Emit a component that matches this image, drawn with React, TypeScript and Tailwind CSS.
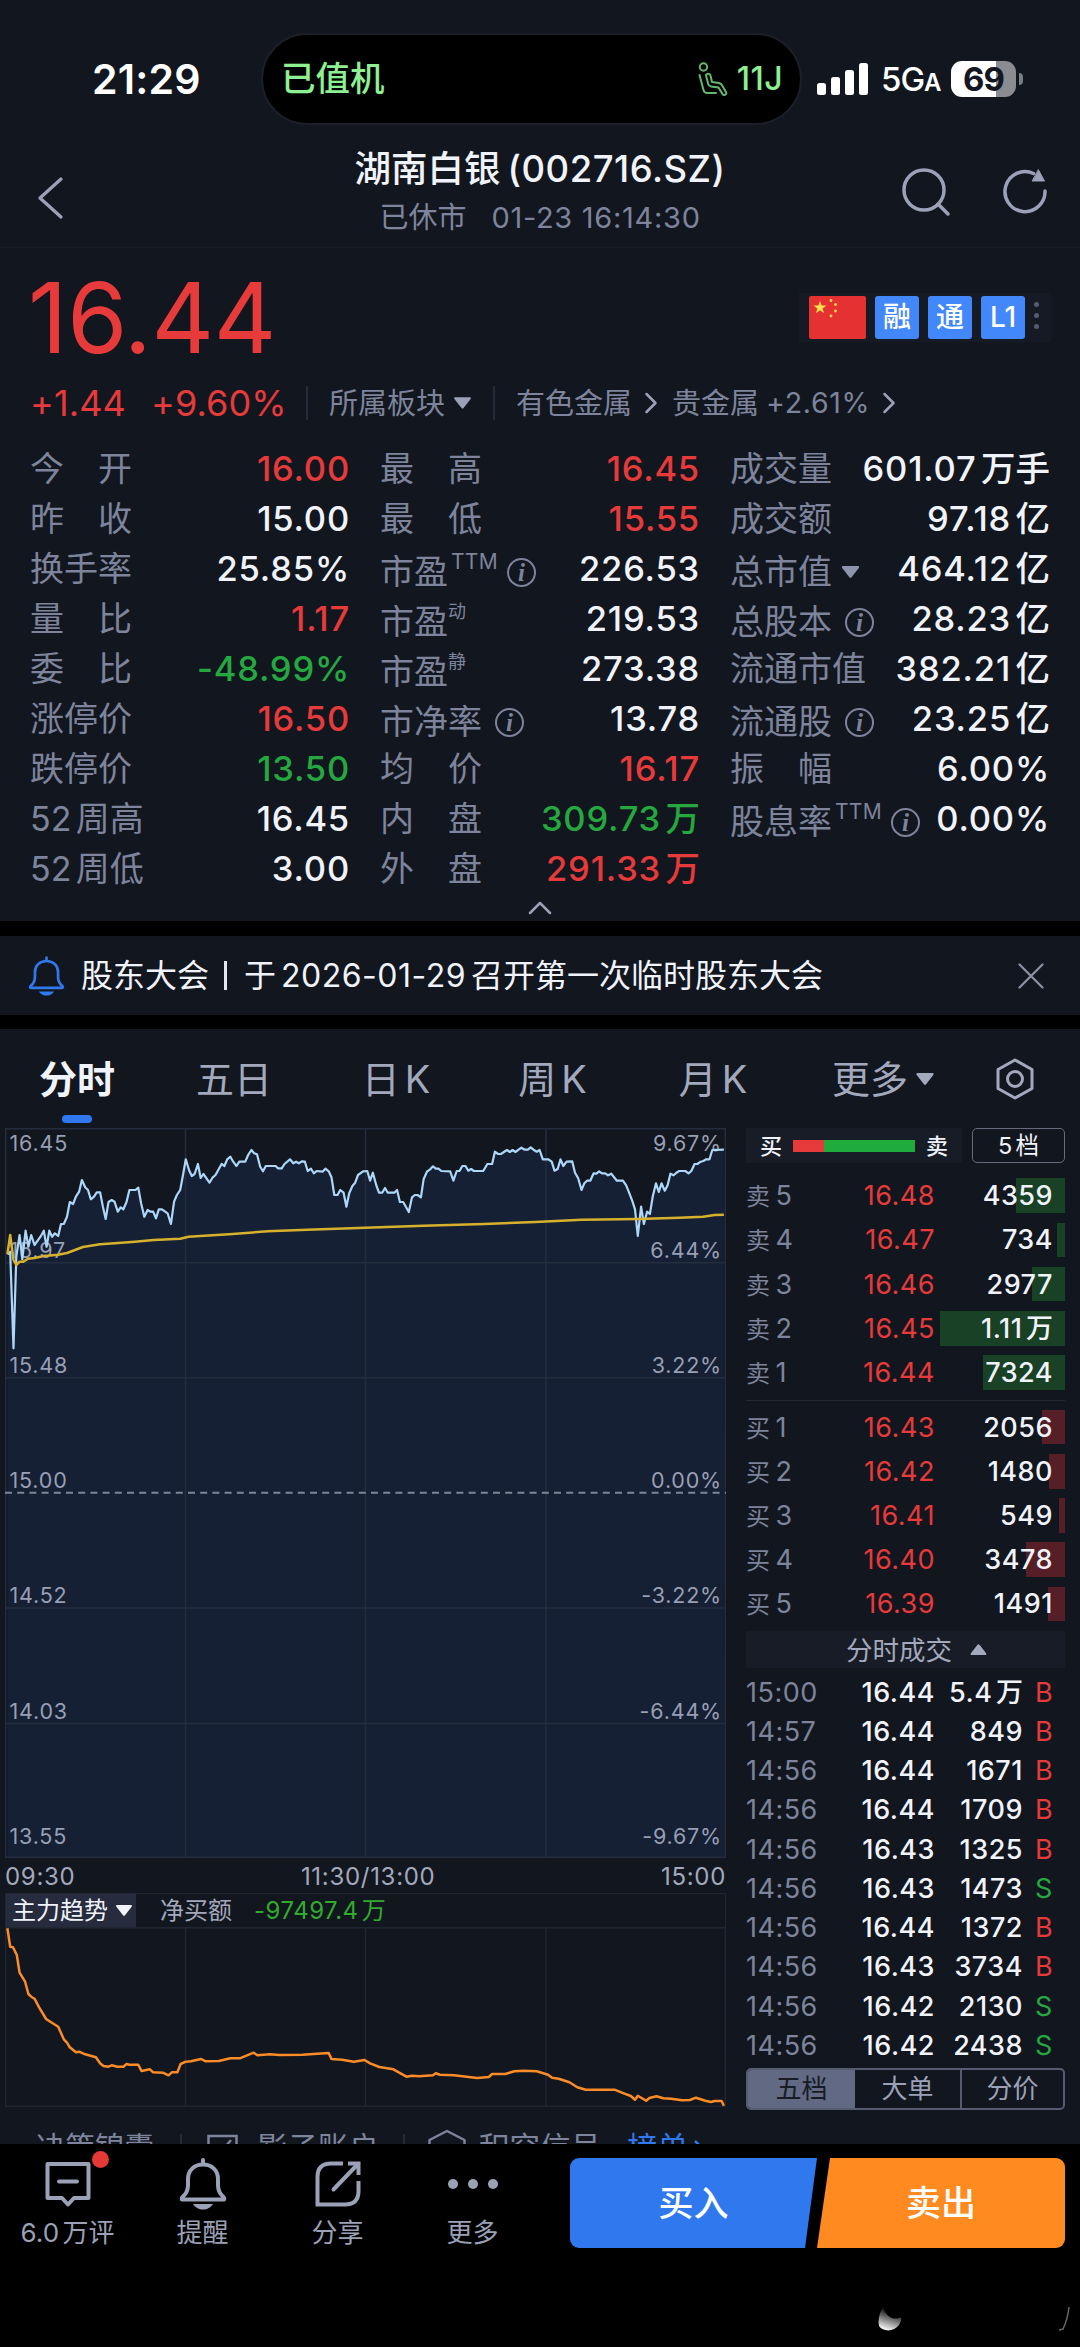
import type { ReactNode } from 'react'
import clsx from 'clsx'

type Tone = 'red' | 'green' | 'white'

type Stat = {
  label: string
  value: string
  tone?: Tone
  sup?: string
  info?: boolean
  caret?: boolean
}

type Point = [number, number]

const toneClass: Record<Tone, string> = {
  red: 'text-[#e63a3b]',
  green: 'text-[#26a840]',
  white: 'text-[#f1f3fa]',
}

const statColumns: Stat[][] = [
  [
    { label: '今 开', value: '16.00', tone: 'red' },
    { label: '昨 收', value: '15.00' },
    { label: '换手率', value: '25.85%' },
    { label: '量 比', value: '1.17', tone: 'red' },
    { label: '委 比', value: '-48.99%', tone: 'green' },
    { label: '涨停价', value: '16.50', tone: 'red' },
    { label: '跌停价', value: '13.50', tone: 'green' },
    { label: '52周高', value: '16.45' },
    { label: '52周低', value: '3.00' },
  ],
  [
    { label: '最 高', value: '16.45', tone: 'red' },
    { label: '最 低', value: '15.55', tone: 'red' },
    { label: '市盈', value: '226.53', sup: 'TTM', info: true },
    { label: '市盈', value: '219.53', sup: '动' },
    { label: '市盈', value: '273.38', sup: '静' },
    { label: '市净率', value: '13.78', info: true },
    { label: '均 价', value: '16.17', tone: 'red' },
    { label: '内 盘', value: '309.73万', tone: 'green' },
    { label: '外 盘', value: '291.33万', tone: 'red' },
  ],
  [
    { label: '成交量', value: '601.07万手' },
    { label: '成交额', value: '97.18亿' },
    { label: '总市值', value: '464.12亿', caret: true },
    { label: '总股本', value: '28.23亿', info: true },
    { label: '流通市值', value: '382.21亿' },
    { label: '流通股', value: '23.25亿', info: true },
    { label: '振 幅', value: '6.00%' },
    { label: '股息率', value: '0.00%', sup: 'TTM', info: true },
  ],
]

const asks = [
  { label: '卖5', price: '16.48', volume: '4359', bar: 49 },
  { label: '卖4', price: '16.47', volume: '734', bar: 8 },
  { label: '卖3', price: '16.46', volume: '2977', bar: 33 },
  { label: '卖2', price: '16.45', volume: '1.11万', bar: 125 },
  { label: '卖1', price: '16.44', volume: '7324', bar: 82 },
]

const bids = [
  { label: '买1', price: '16.43', volume: '2056', bar: 23 },
  { label: '买2', price: '16.42', volume: '1480', bar: 16 },
  { label: '买3', price: '16.41', volume: '549', bar: 6 },
  { label: '买4', price: '16.40', volume: '3478', bar: 39 },
  { label: '买5', price: '16.39', volume: '1491', bar: 17 },
]

const trades = [
  ['15:00', '16.44', '5.4万', 'B'],
  ['14:57', '16.44', '849', 'B'],
  ['14:56', '16.44', '1671', 'B'],
  ['14:56', '16.44', '1709', 'B'],
  ['14:56', '16.43', '1325', 'B'],
  ['14:56', '16.43', '1473', 'S'],
  ['14:56', '16.44', '1372', 'B'],
  ['14:56', '16.43', '3734', 'B'],
  ['14:56', '16.42', '2130', 'S'],
  ['14:56', '16.42', '2438', 'S'],
]

const priceLabels = [
  { y: 15, price: '16.45', pct: '9.67%' },
  { y: 122.5, price: '15.97', pct: '6.44%' },
  { y: 237.5, price: '15.48', pct: '3.22%' },
  { y: 352.5, price: '15.00', pct: '0.00%' },
  { y: 467.5, price: '14.52', pct: '-3.22%' },
  { y: 583, price: '14.03', pct: '-6.44%' },
  { y: 708.5, price: '13.55', pct: '-9.67%' },
]

const pricePoints: Point[] = [
  [16, 463], [22, 455], [29, 745], [35, 470], [42, 405], [48, 478], [55, 392], [61, 440], [67, 405], [74, 435],
  [87, 410], [94, 392], [100, 440], [106, 392], [112, 410], [118, 400], [125, 408], [131, 372], [137, 372],
  [144, 350], [150, 306], [157, 312], [163, 290], [170, 275], [176, 240], [183, 262], [189, 270], [195, 298],
  [202, 290], [208, 277], [215, 277], [221, 320], [227, 357], [233, 306], [240, 300], [246, 305], [253, 335],
  [259, 322], [265, 328], [272, 305], [278, 270], [291, 270], [297, 263], [303, 310], [310, 350], [317, 330],
  [323, 335], [329, 335], [335, 355], [341, 328], [348, 328], [360, 340], [367, 372], [374, 305], [380, 285],
  [387, 270], [393, 225], [399, 178], [406, 210], [412, 228], [418, 222], [425, 192], [431, 234], [437, 222],
  [450, 248], [457, 232], [463, 225], [476, 192], [482, 198], [488, 178], [495, 170], [501, 185], [508, 198],
  [514, 185], [527, 185], [533, 165], [540, 150], [546, 160], [552, 163], [559, 200], [565, 214], [571, 198],
  [592, 198], [597, 205], [605, 205], [611, 192], [623, 178], [630, 190], [636, 185], [642, 190], [648, 184],
  [655, 185], [661, 213], [668, 206], [674, 220], [680, 213], [693, 215], [699, 206], [706, 214], [712, 232],
  [718, 285], [725, 285], [731, 270], [738, 278], [744, 320], [750, 280], [757, 258], [763, 248], [769, 225],
  [780, 214], [789, 213], [795, 242], [801, 218], [808, 255], [814, 278], [821, 278], [827, 264], [833, 278],
  [847, 278], [853, 270], [859, 306], [866, 306], [878, 336], [885, 292], [891, 285], [897, 285], [904, 292],
  [910, 238], [917, 215], [924, 208], [930, 199], [936, 206], [942, 206], [948, 213], [967, 214], [974, 242],
  [981, 213], [987, 213], [993, 198], [1000, 198], [1006, 212], [1012, 207], [1018, 213], [1038, 213],
  [1047, 192], [1057, 192], [1063, 155], [1070, 162], [1076, 162], [1089, 150], [1095, 156], [1101, 150],
  [1107, 156], [1114, 149], [1120, 143], [1127, 149], [1134, 149], [1140, 142], [1146, 149], [1153, 155],
  [1159, 150], [1166, 178], [1178, 178], [1185, 185], [1191, 212], [1198, 207], [1204, 178], [1210, 198],
  [1217, 185], [1229, 184], [1235, 218], [1242, 235], [1249, 270], [1255, 250], [1261, 242], [1268, 242],
  [1275, 220], [1281, 221], [1287, 214], [1293, 220], [1300, 220], [1306, 226], [1313, 221], [1325, 242],
  [1338, 242], [1345, 256], [1352, 280], [1358, 302], [1364, 328], [1370, 408], [1377, 320], [1383, 372],
  [1390, 335], [1396, 342], [1402, 290], [1409, 250], [1415, 276], [1421, 250], [1428, 272], [1434, 256],
  [1440, 221], [1447, 226], [1453, 218], [1459, 213], [1472, 213], [1479, 220], [1485, 213], [1492, 192],
  [1498, 192], [1505, 185], [1511, 183], [1517, 178], [1524, 178], [1530, 150], [1555, 149],
]

const avgPoints: Point[] = [
  [16, 463], [22, 405], [29, 480], [35, 495], [42, 485], [50, 485], [60, 476], [74, 474], [94, 468], [125, 464],
  [144, 459], [178, 441], [215, 433], [246, 430], [290, 425], [330, 420], [387, 416], [405, 410], [500, 402],
  [575, 394], [660, 389], [785, 383], [910, 377], [1040, 372], [1150, 366], [1250, 359], [1370, 357],
  [1460, 353], [1510, 350], [1535, 345], [1555, 344],
]

const trendPoints: Point[] = [
  [16, 265], [22, 320], [28, 322], [36, 345], [42, 398], [54, 425], [61, 462], [67, 470], [74, 476], [84, 502],
  [99, 537], [108, 545], [125, 560], [137, 598], [144, 608], [150, 622], [163, 637], [170, 635], [183, 643],
  [206, 652], [215, 670], [222, 678], [233, 680], [240, 676], [252, 680], [265, 680], [272, 672], [278, 674],
  [297, 674], [304, 693], [322, 688], [329, 697], [350, 698], [362, 706], [369, 697], [381, 697], [388, 672],
  [399, 665], [410, 664], [432, 657], [442, 664], [470, 663], [495, 655], [515, 655], [545, 638], [553, 646],
  [580, 643], [600, 645], [650, 644], [706, 639], [712, 657], [735, 659], [760, 665], [783, 660], [795, 670],
  [815, 681], [845, 688], [873, 710], [885, 707], [900, 709], [930, 706], [936, 700], [945, 704], [975, 706],
  [1025, 714], [1050, 711], [1057, 702], [1085, 702], [1105, 694], [1125, 692], [1153, 694], [1177, 704],
  [1186, 713], [1200, 716], [1223, 727], [1240, 742], [1258, 749], [1320, 749], [1340, 760], [1355, 768],
  [1364, 779], [1370, 767], [1388, 782], [1395, 774], [1410, 769], [1425, 775], [1442, 776], [1465, 781],
  [1482, 780], [1495, 773], [1515, 782], [1527, 786], [1535, 783], [1550, 783], [1555, 797],
]

// points are stored on a 2.148 x 3 grid
function toPath(points: Point[], offsetY: number) {
  return points
    .map(([x, y], i) => `${i ? 'L' : 'M'}${(x / 2.148 - 5).toFixed(1)} ${(y / 3 - offsetY).toFixed(1)}`)
    .join('')
}

// puts a thin gap between latin digits and hanzi, hanzi keep their own advance
function Mixed({ text }: { text: string }) {
  const parts = text.split(/(?<=[0-9A-Z.])(?=[\u4e00-\u9fff])|(?<=[\u4e00-\u9fff])(?=[0-9A-Z])/)
  return (
    <span className="whitespace-nowrap">
      {parts.map((part, i) => (
        <span key={i} className={clsx(i > 0 && 'ml-[0.13em]', /[\u4e00-\u9fff]/.test(part) && 'tracking-normal')}>
          {part}
        </span>
      ))}
    </span>
  )
}

function Caret({ className, up }: { className?: string; up?: boolean }) {
  return (
    <svg viewBox="0 0 16 11" className={clsx('shrink-0 fill-current', className)}>
      <path d={up ? 'M7 .8a1.4 1.4 0 0 1 2 0l6.6 8.4c.6.9.2 1.8-.8 1.8H1.2C.2 11-.2 10 .4 9.200z' : 'M7 10.200a1.400 1.400 0 0 0 2 0l6.600-8.400C16.200.9 15.800 0 14.800 0H1.200C.2 0-.2.9.4 1.800z'} />
    </svg>
  )
}

function InfoIcon() {
  return (
    <span className="flex size-[29px] shrink-0 items-center justify-center rounded-full border-2 border-[#7d849b] font-['Liberation_Serif',serif] text-[25px] leading-none font-bold text-[#7d849b] italic">
      i
    </span>
  )
}

function Bell({ className, strokeWidth }: { className: string; strokeWidth: number }) {
  return (
    <svg viewBox="0 0 48 52" fill="none" stroke="currentColor" strokeWidth={strokeWidth} strokeLinejoin="round" strokeLinecap="round" className={className}>
      <path d="M24 2v4M24 6.500c-9 0-15 6-15 14.500v6c0 6-1.500 8.500-5 11.500-2 1.800-1.500 3 0 3h40c1.500 0 2-1.200 0-3-3.500-3-5-5.500-5-11.500v-6c0-8.500-6-14.500-15-14.500z" />
      <path d="M14 46h20c-2 3.500-6 5.500-10 5.500S16 49.500 14 46z" fill="currentColor" stroke="none" />
    </svg>
  )
}

function StatusBar() {
  return (
    <div className="mt-[34px] flex h-[90px] items-center pl-[92px]">
      <div className="w-[169px] text-[41px] leading-none font-semibold tracking-[0.2px] text-white">21:29</div>
      <div className="flex h-[92px] w-[541px] items-center justify-between rounded-[46px] border-2 border-[#1b1f28] bg-black pr-[17px] pl-[18px] font-medium text-[#8df093]">
        <span className="text-[34.500px] leading-none">已值机</span>
        <span className="flex items-center gap-[9px]">
          <svg viewBox="0 0 30 34" fill="none" stroke="#62b96b" strokeWidth="2" strokeLinecap="round" strokeLinejoin="round" className="h-[34px] w-[30px]">
            <circle cx="5.500" cy="5" r="3.700" />
            <path d="M1.500 13l4 15c.6 2.200 1.600 3 3.500 3h9" />
            <path d="M8 13.500c.3-2.500 4-2.500 4.500 0l1.500 6.500 7 1c1.600.3 2.500 1 3.200 2.500l4 7c.8 2-2.500 3.500-3.700 1.500l-4-6.500-7.500-1c-1.500-.2-2.400-1-2.800-2.500z" />
          </svg>
          <span className="text-[32px] leading-none tracking-[0.4px]">11J</span>
        </span>
      </div>
      <div className="ml-[15px] flex h-[32px] w-[51px] items-end justify-between">
        <i className="h-[12px] w-[9px] rounded-[2.500px] bg-white" />
        <i className="h-[18px] w-[9px] rounded-[2.500px] bg-white" />
        <i className="h-[25px] w-[9px] rounded-[2.500px] bg-white" />
        <i className="h-[32px] w-[9px] rounded-[2.500px] bg-white" />
      </div>
      <div className="ml-[13px] flex w-[70px] items-baseline text-[33px] leading-none font-medium tracking-[-1px] text-white">
        5G<span className="text-[24px] font-semibold">A</span>
      </div>
      <div className="flex h-[36px] w-[65px] items-center justify-center rounded-[11px] bg-linear-to-r from-white from-[69%] to-[#8b8c91] to-[69%] text-[33px] leading-none font-bold tracking-[-1px] text-[#14171f]">
        69
      </div>
      <i className="ml-[3px] h-[12px] w-[4px] rounded-r-full bg-[#7c7e84]" />
    </div>
  )
}

function Header() {
  return (
    <header className="flex h-[124px] justify-between border-b border-[#181c26]">
      <div className="w-[200px] pt-[52px] pl-[36px]">
        <svg viewBox="0 0 28 44" fill="none" stroke="#9ba1b6" strokeWidth="3.300" strokeLinecap="round" strokeLinejoin="round" className="h-[44px] w-[28px]">
          <path d="M25 3L4 22l21 19" />
        </svg>
      </div>
      <div className="flex flex-col items-center pt-[21px]">
        <h1 className="flex h-[48px] items-center gap-[7px] text-[36.500px] leading-none font-medium whitespace-nowrap text-[#f1f3fa]">
          <span>湖南白银</span>
          <span className="tracking-[0.5px]">(002716.SZ)</span>
        </h1>
        <p className="flex h-[48px] items-center gap-[25px] text-[29px] leading-none whitespace-nowrap text-[#7d849b]">
          <span>已休市</span>
          <span className="tracking-[0.7px]">01-23 16:14:30</span>
        </p>
      </div>
      <div className="flex w-[200px] justify-end gap-[51px] pt-[43px] pr-[32px] text-[#9ba1b6]">
        <svg viewBox="0 0 50 50" fill="none" stroke="currentColor" strokeWidth="3.500" strokeLinecap="round" className="size-[50px]">
          <circle cx="23" cy="23" r="20" />
          <path d="M37 37l10 10" />
        </svg>
        <svg viewBox="0 0 46 50" fill="none" stroke="currentColor" strokeWidth="3.500" strokeLinecap="round" className="h-[50px] w-[46px]">
          <path d="M43 24a20 20 0 1 1-11.500-17.500" />
          <path d="M36.500 3l6 11H30.500z" fill="currentColor" strokeWidth="1" strokeLinejoin="round" />
        </svg>
      </div>
    </header>
  )
}

function Badge({ children }: { children: ReactNode }) {
  return (
    <span className="flex h-[43px] w-[44px] items-center justify-center rounded-[3px] bg-[#4388fb] text-[28px] leading-none font-medium text-white">
      {children}
    </span>
  )
}

function Quote() {
  return (
    <section className="h-[673px]">
      <div className="flex h-[138px] items-center justify-between pr-[29px] pl-[28px]">
        <span className="text-[97px] leading-none font-normal tracking-[-0.300px] text-[#e63a3b]">16.44</span>
        <div className="flex h-[49px] w-[252px] items-center gap-[9px] bg-[#151a24] pl-[10px]">
          <svg viewBox="0 0 57 43" className="h-[43px] w-[57px]">
            <rect width="57" height="43" rx="2" fill="#e53131" />
            <path d="M11 5l1.600 4.600h4.900l-3.900 2.900 1.500 4.700-4.100-2.900-4.100 2.900 1.500-4.700-3.900-2.900h4.900z" fill="#ffe14d" />
            <g fill="#ffd84d">
              <circle cx="22" cy="4.500" r="1.400" />
              <circle cx="26.500" cy="8.500" r="1.400" />
              <circle cx="26.500" cy="15" r="1.400" />
              <circle cx="22" cy="20" r="1.400" />
            </g>
          </svg>
          <Badge>融</Badge>
          <Badge>通</Badge>
          <Badge>L1</Badge>
          <span className="flex flex-col gap-[6px] pb-[4px]">
            <i className="size-[5px] rounded-full bg-[#565c6e]" />
            <i className="size-[5px] rounded-full bg-[#565c6e]" />
            <i className="size-[5px] rounded-full bg-[#565c6e]" />
          </span>
        </div>
      </div>

      <div className="flex h-[34px] items-center pl-[30px] text-[29px] leading-none whitespace-nowrap text-[#7d849b]">
        <span className="w-[121px] text-[36px] tracking-[0.1px] text-[#e63a3b]">+1.44</span>
        <span className="w-[155px] text-[36px] tracking-[0.1px] text-[#e63a3b]">+9.60%</span>
        <i className="h-[34px] w-[2px] bg-[#252b39]" />
        <span className="ml-[21px]">所属板块</span>
        <Caret className="ml-[9px] h-[12px] w-[17px] text-[#9ba1b6]" />
        <i className="ml-[22px] h-[34px] w-[2px] bg-[#252b39]" />
        <span className="ml-[21px]">有色金属</span>
        <ChevronRight className="ml-[12px]" />
        <span className="ml-[14px]">贵金属</span>
        <span className="ml-[7px] text-[28.500px] tracking-[0.7px]">+2.61%</span>
        <ChevronRight className="ml-[12px]" />
      </div>

      <div className="mt-[24px] flex justify-between pr-[30px] pl-[30px]">
        {statColumns.map((column, i) => (
          <div key={i} className="w-[320px]">
            {column.map((stat, j) => (
              <StatRow key={j} {...stat} />
            ))}
          </div>
        ))}
      </div>

      <div className="flex h-[27px] items-center justify-center">
        <svg viewBox="0 0 24 14" fill="none" stroke="#9ba1b6" strokeWidth="2.500" strokeLinecap="round" strokeLinejoin="round" className="h-[14px] w-[24px]">
          <path d="M2 12L12 2l10 10" />
        </svg>
      </div>
    </section>
  )
}

function ChevronRight({ className }: { className?: string }) {
  return (
    <svg viewBox="0 0 14 22" fill="none" stroke="#9ba1b6" strokeWidth="2.500" strokeLinecap="round" strokeLinejoin="round" className={clsx('h-[22px] w-[14px] shrink-0', className)}>
      <path d="M2.500 2l9 9-9 9" />
    </svg>
  )
}

function StatRow({ label, value, tone = 'white', sup, info, caret }: Stat) {
  const chars = label.split(' ')
  const lowered = Boolean(sup || info || caret)
  return (
    <div className="flex h-[50px] items-center justify-between whitespace-nowrap">
      <div className={clsx('flex items-center text-[34px] leading-none text-[#7d849b]', lowered && 'pt-[5px]')}>
        {chars.length > 1 ? (
          <span className="flex w-[102px] justify-between">
            {chars.map((c) => (
              <span key={c}>{c}</span>
            ))}
          </span>
        ) : (
          <Mixed text={label} />
        )}
        {sup && (
          <span className={clsx('mb-[20px] leading-none', sup === 'TTM' ? 'ml-[3px] text-[21px] tracking-[0.300px]' : 'text-[18px]')}>{sup}</span>
        )}
        {caret && <Caret className="ml-[9px] h-[12px] w-[19px] text-[#8d94ab]" />}
        {info && (
          <span className={clsx('mt-[2px]', sup ? 'ml-[9px]' : 'ml-[13px]')}>
            <InfoIcon />
          </span>
        )}
      </div>
      <span className={clsx('text-[34.500px] leading-none font-medium tracking-[0.8px]', toneClass[tone])}>
        <Mixed text={value} />
      </span>
    </div>
  )
}

function Notice() {
  return (
    <section className="flex h-[79px] items-center bg-[#12161f] pr-[36px] pl-[28px]">
      <Bell className="h-[40px] w-[37px] text-[#3078ee]" strokeWidth={3.5} />
      <span className="ml-[16px] flex items-center text-[32px] leading-none whitespace-nowrap text-[#f1f3fa]">
        股东大会
        <i className="mr-[17px] ml-[15px] h-[29px] w-[3px] bg-[#e4e6ee]" />
        于<span className="mx-[5px] tracking-[0.5px]">2026-01-29</span>召开第一次临时股东大会
      </span>
      <svg viewBox="0 0 26 26" stroke="#8d93a6" strokeWidth="2.200" strokeLinecap="round" className="ml-auto size-[26px]">
        <path d="M1.500 1.500l23 23M24.500 1.500l-23 23" />
      </svg>
    </section>
  )
}

function Tabs() {
  return (
    <nav className="grid h-[99px] grid-cols-[154px_160px_164px_149px_172px_168px_95px] items-center justify-items-center text-[38px] leading-none text-[#a3a9bc]">
      <span className="relative flex h-full items-center text-[38px] font-bold text-[#f1f3fa]">
        分时
        <i className="absolute bottom-[5px] left-1/2 h-[8px] w-[30px] -translate-x-1/2 rounded-full bg-[#3078ee]" />
      </span>
      <span>五日</span>
      <Mixed text="日K" />
      <Mixed text="周K" />
      <Mixed text="月K" />
      <span className="flex items-center gap-[8px]">
        更多
        <Caret className="h-[12px] w-[18px]" />
      </span>
      <svg viewBox="0 0 40 42" fill="none" stroke="currentColor" strokeWidth="3" strokeLinejoin="round" className="h-[42px] w-[40px]">
        <path d="M20 2l17 9.500v19L20 40 3 30.500v-19z" />
        <circle cx="20" cy="21" r="7.500" />
      </svg>
    </nav>
  )
}

function PriceChart() {
  const line = toPath(pricePoints, 28)
  return (
    <svg viewBox="0 0 721 730" className="block h-[730px] w-[721px]">
      <path d={`${line}L719 729L2.400 729Z`} fill="#152034" />
      <g stroke="#242d3e" strokeWidth="1.500">
        <path d="M.7 0v730M180.500 0v730M360.500 0v730M541 0v730M720.300 0v730" />
        <path d="M0 .7h721M0 134.700h721M0 249.700h721M0 480h721M0 595.500h721M0 729.300h721" />
      </g>
      <path d="M0 364.700h721" stroke="#7d8598" strokeWidth="2" strokeDasharray="7 5.200" />
      <g className="text-[21.500px] tracking-[0.800px]" fill="#989fb4">
        {priceLabels.map(({ y, price, pct }) => (
          <g key={price}>
            <text x="4.500" y={y + 7.7}>{price}</text>
            <text x="717" y={y + 7.7} textAnchor="end">{pct}</text>
          </g>
        ))}
      </g>
      <path d={line} fill="none" stroke="#acd7f8" strokeWidth="2.200" strokeLinejoin="round" />
      <path d={toPath(avgPoints, 28)} fill="none" stroke="#d8b12c" strokeWidth="2.500" strokeLinejoin="round" />
    </svg>
  )
}

function TrendChart() {
  return (
    <svg viewBox="0 0 721 180" className="block h-[180px] w-[721px]">
      <path d="M.7 0v180M180.500 0v180M360.500 0v180M541 0v180M720.300 0v180M0 .7h721M0 179.300h721" stroke="#202632" strokeWidth="1.500" />
      <path d={toPath(trendPoints, 87)} fill="none" stroke="#fb8c28" strokeWidth="2.500" strokeLinejoin="round" />
    </svg>
  )
}

function ChartColumn() {
  return (
    <div className="ml-[5px] w-[721px]">
      <PriceChart />
      <div className="flex h-[35px] items-center justify-between pt-[3px] text-[24px] leading-none tracking-[0.7px] text-[#a3a9bc]">
        <span>09:30</span>
        <span>11:30/13:00</span>
        <span>15:00</span>
      </div>
      <div className="flex h-[34px] items-center border-x border-t border-[#202632] text-[24px] leading-none whitespace-nowrap">
        <span className="flex h-full w-[130px] items-center gap-[8px] bg-[#262b3e] pl-[6px] text-[#f1f3fa]">
          主力趋势
          <Caret className="h-[13px] w-[16px]" />
        </span>
        <span className="ml-[24px] text-[#a3a9bc]">净买额</span>
        <span className="ml-[22px] tracking-[0.5px] text-[#31ab2c]">
          <Mixed text="-97497.4万" />
        </span>
      </div>
      <TrendChart />
    </div>
  )
}

type Level = (typeof asks)[number]

function LevelRow({ label, price, volume, bar, barClass }: Level & { barClass: string }) {
  return (
    <div className="relative flex h-[34.600px] items-center text-[27px] leading-none tracking-[0.5px]">
      <i className={clsx('absolute inset-y-0 right-0', barClass)} style={{ width: bar }} />
      <span className="w-[88px] text-[#7d849b]">
        <span className="text-[24px]">{label[0]}</span>
        <span className="ml-[5px]">{label[1]}</span>
      </span>
      <span className="w-[101px] text-right text-[#e63a3b]">{price}</span>
      <span className="relative ml-auto pr-[12px] font-medium text-[#f1f3fa]">
        <Mixed text={volume} />
      </span>
    </div>
  )
}

function OrderBook() {
  return (
    <div className="ml-[20px] flex w-[319px] flex-col">
      <div className="flex h-[36px] justify-between">
        <div className="flex w-[216px] items-center justify-between bg-[#171c27] px-[14px] text-[22px] leading-none font-medium text-[#f1f3fa]">
          买
          <span className="flex h-[12px] w-[122px] bg-[#20ab3d]">
            <i className="w-[31px] bg-[#e63a3b]" />
          </span>
          卖
        </div>
        <div className="flex w-[93px] items-center justify-center rounded-[5px] border-[1.500px] border-[#656b7d] text-[23.500px] leading-none text-[#f1f3fa]">
          <Mixed text="5档" />
        </div>
      </div>

      <div className="mt-[15px] flex flex-col gap-[9.600px]">
        {asks.map((level) => (
          <LevelRow key={level.label} {...level} barClass="bg-[#184125]" />
        ))}
      </div>
      <i className="mt-[10px] h-px bg-[#232835]" />
      <div className="mt-[9px] flex flex-col gap-[9.600px]">
        {bids.map((level) => (
          <LevelRow key={level.label} {...level} barClass="bg-[#561f27]" />
        ))}
      </div>

      <div className="mt-[10px] flex h-[37px] items-center justify-center gap-[18px] bg-[#171c27] pt-px pl-[22px] text-[26.500px] leading-none text-[#a3a9bc]">
        分时成交
        <Caret up className="h-[11px] w-[17px]" />
      </div>
      <div className="mt-[5px] text-[27px] leading-none tracking-[0.5px]">
        {trades.map(([time, price, volume, side], i) => (
          <div key={i} className="flex h-[39.260px] items-center">
            <span className="w-[88px] text-[#7d849b]">{time}</span>
            <span className="w-[101px] text-right font-medium text-[#f1f3fa]">{price}</span>
            <span className="w-[88px] text-right font-medium text-[#f1f3fa]">
              <Mixed text={volume} />
            </span>
            <span className={clsx('ml-auto w-[30px]', side === 'B' ? 'text-[#e63a3b]' : 'text-[#26a840]')}>{side}</span>
          </div>
        ))}
      </div>

      <div className="mt-[3px] grid h-[42px] shrink-0 grid-cols-[107px_105px_107px] overflow-hidden rounded-[5px] border-2 border-[#565c6f] text-[26px] leading-none text-[#9ba1b6]">
        <span className="flex items-center justify-center bg-[#626982] text-[#171c27]">五档</span>
        <span className="flex items-center justify-center">大单</span>
        <span className="flex items-center justify-center border-l-2 border-[#565c6f] pr-[4px]">分价</span>
      </div>
    </div>
  )
}

// only the top edge of this strip shows above the action bar
function SignalStrip() {
  return (
    <div className="flex h-[34px] items-start overflow-hidden pt-[23px] pl-[36px] text-[30.500px] leading-none whitespace-nowrap text-[#7d849b]">
      <span className="w-[144px] text-[29.500px]">决策锦囊</span>
      <i className="mt-[1px] h-[28px] w-[2px] bg-[#252b39]" />
      <svg viewBox="0 0 32 32" fill="none" stroke="currentColor" strokeWidth="2.500" className="mt-[1px] ml-[25px] size-[32px] shrink-0">
        <rect x="1.500" y="2" width="28" height="28" />
        <path d="M24 6L14 18l-5-5" />
      </svg>
      <span className="ml-[18px] w-[146px]">影子账户</span>
      <i className="mt-[1px] h-[28px] w-[2px] bg-[#252b39]" />
      <svg viewBox="0 0 38 40" fill="none" stroke="currentColor" strokeWidth="2.500" strokeLinejoin="round" className="-mt-[4px] ml-[23px] h-[40px] w-[38px] shrink-0">
        <path d="M1.500 32V11L19 2l17.500 9v21" />
      </svg>
      <span className="ml-[13px] w-[122px]">积突信号</span>
      <span className="ml-[26px] text-[#3078ee]">榜单</span>
      <svg viewBox="0 0 10 16" fill="none" stroke="#3078ee" strokeWidth="2.500" className="mt-[7px] ml-[6px] h-[16px] w-[10px]">
        <path d="M1 1l7 7-7 7" />
      </svg>
    </div>
  )
}

function Action({ icon, label }: { icon: ReactNode; label: ReactNode }) {
  return (
    <div className="flex w-[135px] flex-col items-center text-[#9ba1b6]">
      <div className="flex h-[52px] items-center">{icon}</div>
      <span className="mt-[10px] text-[26px] leading-none whitespace-nowrap">{label}</span>
    </div>
  )
}

function ActionBar() {
  return (
    <footer className="flex h-[203px] flex-col justify-between bg-black">
      <div className="flex pt-[14px]">
        <Action
          icon={
            <span className="relative">
              <svg viewBox="0 0 46 46" fill="none" stroke="currentColor" strokeWidth="4" strokeLinecap="round" strokeLinejoin="round" className="size-[46px]">
                <path d="M2.500 3h41v34H29l-6 6.500-6-6.500H2.500zM14 20.500h18" />
              </svg>
              <i className="absolute -top-[10px] -right-[18px] size-[17px] rounded-full bg-[#e53935]" />
            </span>
          }
          label={<Mixed text="6.0万评" />}
        />
        <Action icon={<Bell className="h-[52px] w-[48px]" strokeWidth={4} />} label="提醒" />
        <Action
          icon={
            <svg viewBox="0 0 46 46" fill="none" stroke="currentColor" strokeWidth="4" strokeLinecap="square" className="size-[46px]">
              <path d="M26 2.500H16Q2.500 2.500 2.500 16v27.500H30q13.500 0 13.500-13.500v-8" />
              <path d="M35 2.500h8.500V12" />
              <path d="M18.500 28.500L42 4" strokeLinecap="round" />
            </svg>
          }
          label="分享"
        />
        <Action
          icon={
            <span className="flex gap-[10px]">
              <i className="size-[10px] rounded-full bg-current" />
              <i className="size-[10px] rounded-full bg-current" />
              <i className="size-[10px] rounded-full bg-current" />
            </span>
          }
          label="更多"
        />
        <div className="ml-[30px] flex h-[90px] text-[35px] leading-none font-medium text-white">
          <button className="w-[247px] rounded-l-[9px] bg-[#3078ee] [clip-path:polygon(0_0,100%_0,235px_100%,0_100%)]">买入</button>
          <button className="w-[248px] rounded-r-[9px] bg-[#ff8a1f] [clip-path:polygon(13px_0,100%_0,100%_100%,0_100%)]">卖出</button>
        </div>
      </div>
      <svg viewBox="0 0 210 40" className="mb-[6px] ml-auto h-[40px] w-[210px]">
        <defs>
          <linearGradient id="fade" x1="0.300" y1="1" x2="0.600" y2="0">
            <stop offset="0" stopColor="#fff" />
            <stop offset="0.900" stopColor="#000" />
          </linearGradient>
        </defs>
        <path d="M13 6c-4 7-5 13-4 19 4 6 15 6 20-1 3-5 3-9 0-7-6 2-13-1-16-11z" fill="url(#fade)" />
        <path d="M199 6c-1 9-3 16-6 22l-4 1" stroke="#67686b" strokeWidth="1.500" fill="none" />
      </svg>
    </footer>
  )
}

export default function App() {
  return (
    <div className="flex h-[2347px] w-[1080px] flex-col overflow-hidden bg-black font-['Inter','Noto_Sans_CJK_SC',sans-serif]">
      <div className="bg-[#12161f]">
        <div className="h-[248px] overflow-hidden">
          <StatusBar />
          <Header />
        </div>
        <Quote />
      </div>
      <div className="mt-[15px]">
        <Notice />
      </div>
      <main className="mt-[14px] h-[1115px] overflow-hidden bg-[#12161f]">
        <Tabs />
        <div className="flex h-[982px]">
          <ChartColumn />
          <OrderBook />
        </div>
        <SignalStrip />
      </main>
      <ActionBar />
    </div>
  )
}
